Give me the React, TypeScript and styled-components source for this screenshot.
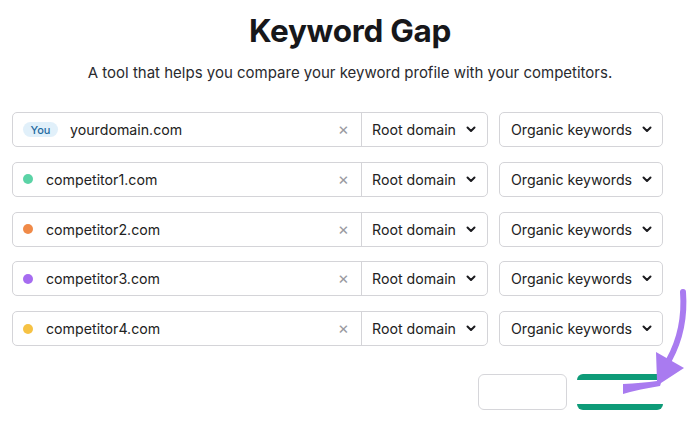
import React from "react";
import styled, { createGlobalStyle } from "styled-components";

const Global = createGlobalStyle`
  html, body { margin: 0; padding: 0; background: #ffffff; }
  body { font-family: Inter, "Noto Sans", Arial, sans-serif; color: #1b1b1f; }
  * { box-sizing: border-box; }
`;

const Page = styled.div`
  position: relative;
  width: 700px;
  height: 422px;
  overflow: hidden;
  background: #fff;
  display: flex;
  flex-direction: column;
  align-items: stretch;
`;

const Title = styled.h1`
  margin: 10px 0 0;
  text-align: center;
  font-family: Inter, Lato, sans-serif;
  font-size: 31.5px;
  font-weight: 700;
  letter-spacing: -0.3px;
  line-height: 42px;
  color: #17171a;
`;

const Subtitle = styled.p`
  margin: 11px 0 0;
  text-align: center;
  font-size: 15px;
  line-height: 20px;
  color: #2a2a2e;
`;

const Rows = styled.div`
  margin: 29px 0 0 12px;
  width: 651px;
  display: flex;
  flex-direction: column;
  gap: 14.75px;
`;

const Row = styled.div`
  display: flex;
  gap: 11px;
  height: 35px;
`;

const Group = styled.div`
  width: 476px;
  display: flex;
  border: 1px solid #d4d4d8;
  border-radius: 5px;
  background: #fff;
`;

const Field = styled.div`
  flex: 1;
  display: flex;
  align-items: center;
  padding: 0 10px 0 10px;
  border-right: 1px solid #d4d4d8;
  font-size: 14.2px;
  color: #222;
  white-space: nowrap;
`;

const Badge = styled.span`
  display: inline-flex;
  align-items: center;
  justify-content: center;
  width: 35px;
  height: 15px;
  border-radius: 8px;
  background: #e1f0fa;
  color: #1f6aa0;
  font-size: 11px;
  font-weight: 500;
  margin-right: 12px;
`;

const Dot = styled.span<{ $c: string }>`
  width: 10px;
  height: 10px;
  border-radius: 50%;
  background: ${(p) => p.$c};
  margin: 0 13px 0 0;
`;

const Domain = styled.span`
  flex: 1;
`;

const Clear = styled.span`
  color: #9a9aa0;
  font-size: 17px;
  margin-right: 2px;
  line-height: 1;
`;

const Select = styled.div<{ $w?: number; $bordered?: boolean }>`
  display: flex;
  align-items: center;
  gap: 10px;
  width: ${(p) => (p.$w ? p.$w + "px" : "auto")};
  flex: ${(p) => (p.$w ? "none" : "1")};
  padding: 0 0 0 ${(p) => (p.$bordered ? 11 : 10)}px;
  font-size: 14.2px;
  color: #222;
  white-space: nowrap;
  ${(p) =>
    p.$bordered
      ? `border: 1px solid #d4d4d8; border-radius: 5px;`
      : ``}
`;

const Actions = styled.div`
  margin: 28px 0 0 0;
  width: 663px;
  display: flex;
  justify-content: flex-end;
  gap: 10px;
`;

const GhostButton = styled.div`
  width: 89px;
  height: 36px;
  border: 1px solid #d6d6da;
  border-radius: 6px;
  background: #fff;
`;

const PrimaryButton = styled.div`
  width: 86px;
  height: 36px;
  border-top: 6px solid #0e9b78;
  border-bottom: 6px solid #0e9b78;
  border-radius: 6px;
  background: #fff;
`;

const Arrow = styled.svg`
  position: absolute;
  left: 0;
  top: 0;
  pointer-events: none;
`;

const Chevron = () => (
  <svg width="10" height="7" viewBox="0 0 10 7">
    <path d="M1.5 1.5 L5 5 L8.5 1.5" fill="none" stroke="#1b1b1f" strokeWidth="2" strokeLinecap="round" strokeLinejoin="round" />
  </svg>
);

const rows = [
  { name: "yourdomain.com", you: true },
  { name: "competitor1.com", color: "#5bd3a6" },
  { name: "competitor2.com", color: "#f08a48" },
  { name: "competitor3.com", color: "#a66cf0" },
  { name: "competitor4.com", color: "#f6c244" },
];

export default function App() {
  return (
    <Page>
      <Global />
      <Title>Keyword Gap</Title>
      <Subtitle>A tool that helps you compare your keyword profile with your competitors.</Subtitle>
      <Rows>
        {rows.map((r) => (
          <Row key={r.name}>
            <Group>
              <Field>
                {r.you ? <Badge>You</Badge> : <Dot $c={r.color!} />}
                <Domain>{r.name}</Domain>
                <Clear>×</Clear>
              </Field>
              <Select $w={125}>
                Root domain <Chevron />
              </Select>
            </Group>
            <Select $bordered>
              Organic keywords <Chevron />
            </Select>
          </Row>
        ))}
      </Rows>
      <Actions>
        <GhostButton />
        <PrimaryButton />
      </Actions>
      <Arrow width="700" height="422" viewBox="0 0 700 422">
        <path d="M683 292 C685 318 680 340 669 360" fill="none" stroke="#a97bf0" strokeWidth="6" strokeLinecap="round" />
        <path d="M656 352 L684 368 L661 383 L660 386 Q640 389 623 394 L623 384 Q642 383 657 381 Z" fill="#a97bf0" />
      </Arrow>
    </Page>
  );
}
